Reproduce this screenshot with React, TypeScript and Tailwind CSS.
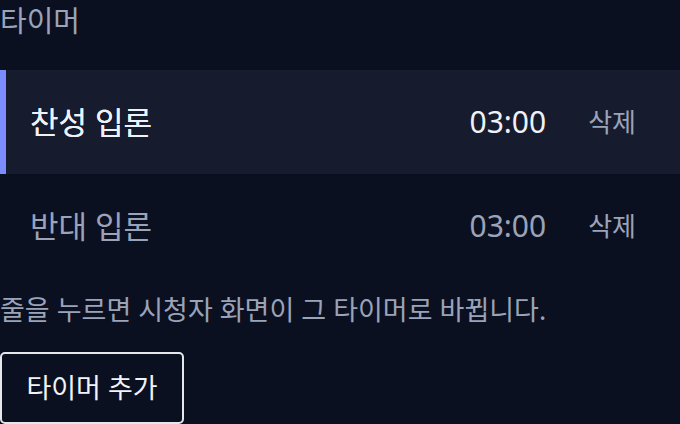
import React from 'react'

const FONT = '"Noto Sans", "Noto Sans CJK KR", sans-serif'

type Timer = { id: string; name: string; time: string }

const TIMERS: Timer[] = [
  { id: 'pro', name: '찬성 입론', time: '03:00' },
  { id: 'con', name: '반대 입론', time: '03:00' },
]

function TimerRow({ timer, active }: { timer: Timer; active: boolean }) {
  return (
    <div
      className={
        active
          ? 'flex items-center h-[104px] border-l-[6px] border-[#7b8cff] bg-[#161b2e] pl-[24px]'
          : 'flex items-center h-[104px] border-l-[6px] border-transparent pl-[24px]'
      }
    >
      <span
        className={
          active
            ? 'flex-1 text-[31px] leading-[40px] text-[#eef1f7] [text-shadow:0_0_0.4px_#eef1f7]'
            : 'flex-1 text-[31px] leading-[40px] text-[#9aa3b8]'
        }
      >
        {timer.name}
      </span>
      <span className={active ? 'text-[30px] leading-[40px] text-[#eef1f7]' : 'text-[30px] leading-[40px] text-[#9aa3b8]'}>
        {timer.time}
      </span>
      <button className="ml-[42px] mr-[44px] text-[26px] leading-[40px] text-[#9aa3b8]">삭제</button>
    </div>
  )
}

export default function App() {
  return (
    <div className="w-[680px] h-[424px] overflow-hidden bg-[#0b1020]" style={{ fontFamily: FONT }}>
      <div className="text-[29px] leading-[42px] text-[#9aa3b8]">타이머</div>

      {/* Timer list */}
      <div className="mt-[28px] flex flex-col">
        {TIMERS.map((t, i) => (
          <TimerRow key={t.id} timer={t} active={i === 0} />
        ))}
      </div>

      <p className="mt-[14px] text-[27px] leading-[36px] text-[#9aa3b8]">
        줄을 누르면 시청자 화면이 그 타이머로 바뀝니다.
      </p>

      <button className="mt-[24px] h-[72px] w-[184px] rounded-[5px] border-2 border-[#e5e7eb] text-[27px] text-[#f1f3f8]">
        타이머 추가
      </button>
    </div>
  )
}
